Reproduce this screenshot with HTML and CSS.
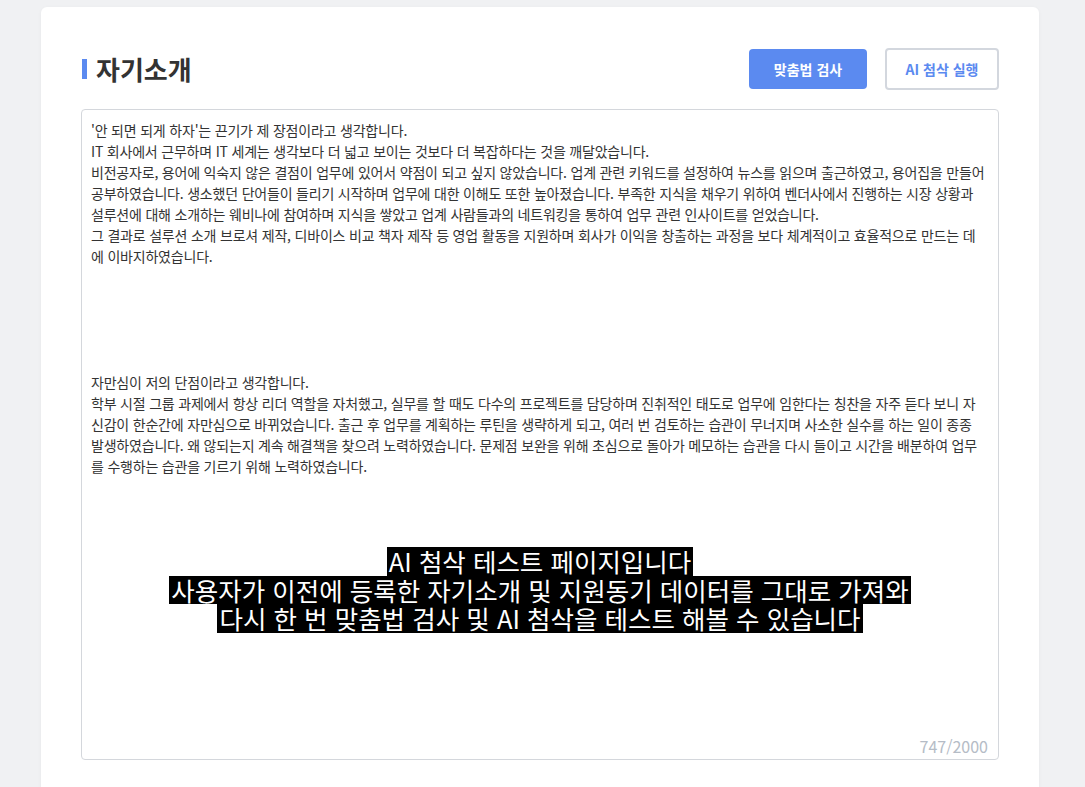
FILE: index.html
```html
<!DOCTYPE html>
<html lang="ko">
<head>
<meta charset="utf-8">
<title>자기소개</title>
<link rel="stylesheet" href="styles.css">
</head>
<body>
<main class="card">
  <header class="card-head">
    <h1 class="title">자기소개</h1>
    <div class="actions">
      <button class="btn btn-primary" type="button">맞춤법 검사</button>
      <button class="btn btn-outline" type="button">AI 첨삭 실행</button>
    </div>
  </header>
  <div class="editor">
    <textarea class="editor-text" readonly>'안 되면 되게 하자'는 끈기가 제 장점이라고 생각합니다.
IT 회사에서 근무하며 IT 세계는 생각보다 더 넓고 보이는 것보다 더 복잡하다는 것을 깨달았습니다.
비전공자로, 용어에 익숙지 않은 결점이 업무에 있어서 약점이 되고 싶지 않았습니다. 업계 관련 키워드를 설정하여 뉴스를 읽으며 출근하였고, 용어집을 만들어 공부하였습니다. 생소했던 단어들이 들리기 시작하며 업무에 대한 이해도 또한 높아졌습니다. 부족한 지식을 채우기 위하여 벤더사에서 진행하는 시장 상황과 설루션에 대해 소개하는 웨비나에 참여하며 지식을 쌓았고 업계 사람들과의 네트워킹을 통하여 업무 관련 인사이트를 얻었습니다.
그 결과로 설루션 소개 브로셔 제작, 디바이스 비교 책자 제작 등 영업 활동을 지원하며 회사가 이익을 창출하는 과정을 보다 체계적이고 효율적으로 만드는 데에 이바지하였습니다.





자만심이 저의 단점이라고 생각합니다.
학부 시절 그룹 과제에서 항상 리더 역할을 자처했고, 실무를 할 때도 다수의 프로젝트를 담당하며 진취적인 태도로 업무에 임한다는 칭찬을 자주 듣다 보니 자신감이 한순간에 자만심으로 바뀌었습니다. 출근 후 업무를 계획하는 루틴을 생략하게 되고, 여러 번 검토하는 습관이 무너지며 사소한 실수를 하는 일이 종종 발생하였습니다. 왜 않되는지 계속 해결책을 찾으려 노력하였습니다. 문제점 보완을 위해 초심으로 돌아가 메모하는 습관을 다시 들이고 시간을 배분하여 업무를 수행하는 습관을 기르기 위해 노력하였습니다.</textarea>
    <div class="counter">747/2000</div>
  </div>
  <div class="caption">
    <span class="caption-line">AI 첨삭 테스트 페이지입니다</span>
    <span class="caption-line">사용자가 이전에 등록한 자기소개 및 지원동기 데이터를 그대로 가져와</span>
    <span class="caption-line">다시 한 번 맞춤법 검사 및 AI 첨삭을 테스트 해볼 수 있습니다</span>
  </div>
</main>
</body>
</html>
```

FILE: styles.css
```css
* {
  box-sizing: border-box;
}

html, body {
  margin: 0;
  height: 100%;
  overflow: hidden;
}

body {
  background: #f0f1f3;
  font-family: "Noto Sans CJK KR", "Noto Sans", sans-serif;
  color: #333;
  padding: 7px 0 0 41px;
}

.card {
  position: relative;
  width: 998px;
  height: 900px;
  background: #fff;
  border-radius: 6px;
  box-shadow: 0 1px 4px rgba(0, 0, 0, 0.04);
  padding: 40px 40px 0 40px;
}

.card-head {
  display: flex;
  align-items: center;
  justify-content: space-between;
  height: 43px;
  margin-bottom: 19px;
}

.title {
  display: flex;
  align-items: center;
  gap: 9px;
  margin: 0 0 0 1px;
  font-size: 26px;
  font-weight: 700;
  color: #333;
  line-height: 1;
}

.title::before {
  content: "";
  width: 5px;
  height: 20px;
  background: #5b8af0;
}

.actions {
  display: flex;
  align-items: center;
  gap: 18px;
}

.btn {
  font-family: "Noto Sans CJK KR", "Noto Sans", sans-serif;
  font-size: 14px;
  font-weight: 700;
  border-radius: 4px;
  cursor: pointer;
  padding: 0;
}

.btn-primary {
  width: 118px;
  height: 40px;
  background: #5b8af0;
  color: #fff;
  border: none;
}

.btn-outline {
  width: 114px;
  height: 42px;
  background: #fff;
  color: #5b8af0;
  border: 2px solid #d3d7de;
}

.editor {
  display: flex;
  flex-direction: column;
  height: 651px;
  border: 1px solid #d4d7dc;
  border-radius: 4px;
}

.editor-text {
  flex: 1;
  border: none;
  outline: none;
  resize: none;
  overflow: hidden;
  padding: 10px 10px 0 9px;
  font-family: "Noto Sans CJK KR", "Noto Sans", sans-serif;
  font-size: 14px;
  letter-spacing: -0.2px;
  line-height: 21px;
  color: #333;
  background: transparent;
}

.counter {
  text-align: right;
  padding: 0 10px 2px 0;
  font-size: 16px;
  line-height: 22px;
  color: #b5bcc6;
}

.caption {
  position: absolute;
  left: 0;
  right: 0;
  top: 540px;
  display: flex;
  flex-direction: column;
  align-items: center;
  font-family: "Noto Sans CJK KR", "Noto Sans", sans-serif;
  font-size: 25.5px;
  color: #fff;
}

.caption-line {
  display: block;
  background: #000;
  line-height: 28.5px;
  padding: 0 2px;
}
```
